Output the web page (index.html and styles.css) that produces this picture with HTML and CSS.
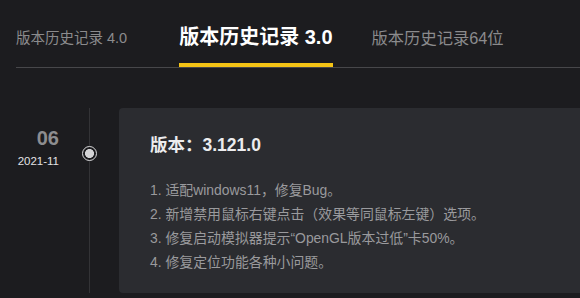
FILE: index.html
```html
<!DOCTYPE html>
<html lang="zh-CN">
<head>
<meta charset="utf-8">
<title>版本历史记录</title>
<link rel="stylesheet" href="styles.css">
</head>
<body>
<div class="page">
  <nav class="tabs">
    <a class="tab tab-first">版本历史记录 4.0</a>
    <a class="tab tab-active">版本历史记录 3.0</a>
    <a class="tab tab-last">版本历史记录64位</a>
  </nav>
  <section class="timeline">
    <div class="item">
      <div class="date">
        <div class="day">06</div>
        <div class="month">2021-11</div>
      </div>
      <div class="axis">
        <span class="dot"></span>
      </div>
      <div class="card">
        <h2 class="version">版本：3.121.0</h2>
        <ol class="notes">
          <li>1. 适配windows11，修复Bug。</li>
          <li>2. 新增禁用鼠标右键点击（效果等同鼠标左键）选项。</li>
          <li>3. 修复启动模拟器提示“OpenGL版本过低”卡50%。</li>
          <li>4. 修复定位功能各种小问题。</li>
        </ol>
      </div>
    </div>
  </section>
</div>
</body>
</html>
```

FILE: styles.css
```css
html, body {
  margin: 0;
  padding: 0;
  background: #1c1c1f;
}
body {
  width: 580px;
  height: 298px;
  overflow: hidden;
  font-family: "Liberation Sans", "Noto Sans CJK SC", sans-serif;
}
.page {
  padding-left: 16px;
}
.tabs {
  display: flex;
  align-items: flex-end;
  height: 67px;
  border-bottom: 1px solid #47474a;
}
.tab {
  display: block;
  color: #8b8b8d;
  font-size: 15px;
  line-height: 20px;
  padding-bottom: 19px;
  white-space: nowrap;
}
.tab-first {
  font-size: 14.5px;
  margin-right: 52px;
}
.tab-active {
  color: #ffffff;
  font-weight: bold;
  font-size: 20px;
  line-height: 24px;
  padding-bottom: 14px;
  border-bottom: 4px solid #f4c315;
  margin-right: 39px;
}
.tab-last {
  font-size: 16.3px;
}
.timeline {
  margin-left: -16px;
  padding-top: 40px;
}
.item {
  display: flex;
}
.date {
  width: 59px;
  flex: none;
  text-align: right;
  padding-top: 18px;
}
.day {
  color: #8d8d8f;
  font-size: 20px;
  font-weight: bold;
  line-height: 24px;
}
.month {
  color: #e2e2e4;
  font-size: 11.5px;
  line-height: 16px;
  margin-top: 3px;
}
.axis {
  width: 60px;
  flex: none;
  display: flex;
  justify-content: center;
  background: linear-gradient(#333336, #333336) no-repeat center / 1px 100%;
}
.dot {
  box-sizing: border-box;
  width: 15px;
  height: 15px;
  margin-top: 38px;
  border-radius: 50%;
  border: 1.5px solid #d9d9db;
  background: radial-gradient(circle, #d4d4d6 0 4.2px, #1c1c1f 4.8px);
}
.card {
  flex: 1;
  min-width: 0;
  background: #2b2c30;
  border-radius: 4px 0 0 4px;
  padding: 25px 0 19px 31px;
  box-sizing: border-box;
}
.version {
  margin: 0;
  color: #ececee;
  font-size: 17.5px;
  font-weight: bold;
  line-height: 24px;
}
.notes {
  list-style: none;
  margin: 21px 0 0;
  padding: 0;
  color: #9a9a9d;
  font-size: 13.9px;
  line-height: 24px;
}
.notes li {
  white-space: nowrap;
}
```
